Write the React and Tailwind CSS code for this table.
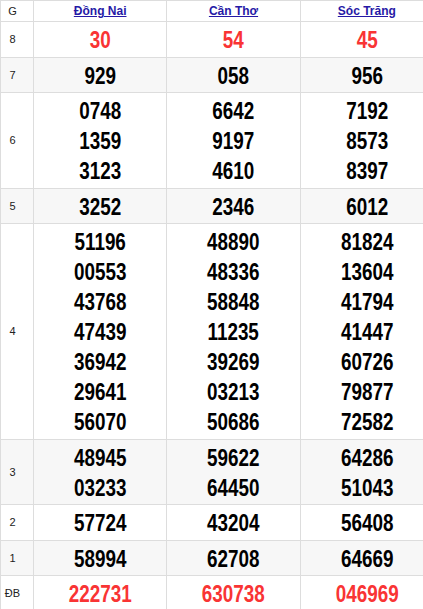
import React from 'react';

const provinces = ['Đồng Nai', 'Cần Thơ', 'Sóc Trăng'];

const rows = [
  { g: '8', red: true, vals: [['30'], ['54'], ['45']] },
  { g: '7', vals: [['929'], ['058'], ['956']] },
  { g: '6', vals: [['0748', '1359', '3123'], ['6642', '9197', '4610'], ['7192', '8573', '8397']] },
  { g: '5', vals: [['3252'], ['2346'], ['6012']] },
  {
    g: '4',
    vals: [
      ['51196', '00553', '43768', '47439', '36942', '29641', '56070'],
      ['48890', '48336', '58848', '11235', '39269', '03213', '50686'],
      ['81824', '13604', '41794', '41447', '60726', '79877', '72582'],
    ],
  },
  { g: '3', vals: [['48945', '03233'], ['59622', '64450'], ['64286', '51043']] },
  { g: '2', vals: [['57724'], ['43204'], ['56408']] },
  { g: '1', vals: [['58994'], ['62708'], ['64669']] },
  { g: 'ĐB', red: true, vals: [['222731'], ['630738'], ['046969']] },
];

export default function App() {
  return (
    <div className="w-full overflow-hidden bg-white font-['Liberation_Sans',Arial,sans-serif]">
      <table className="w-[434px] border-collapse table-fixed">
        <colgroup>
          <col className="w-[33px]" />
          <col />
          <col />
          <col />
        </colgroup>
        <thead>
          <tr className="h-[21px]">
            <th className="border border-[#dddddd] pr-[9px] text-center text-[11px] font-normal text-[#222]">G</th>
            {provinces.map(p => (
              <th key={p} className="border border-[#dddddd] text-center text-[12px] font-bold leading-[20px]">
                <a href="#" className="text-[#2619a6] underline">{p}</a>
              </th>
            ))}
          </tr>
        </thead>
        <tbody>
          {rows.map((r, i) => (
            <tr key={r.g} className={i % 2 === 1 ? 'bg-[#f7f7f7]' : 'bg-white'}>
              <td className="border border-[#dddddd] pr-[9px] text-center text-[11px] text-[#222]">{r.g}</td>
              {r.vals.map((col, j) => (
                <td key={j} className="border border-[#dddddd] pt-[3px] pb-[1.5px] text-center align-middle">
                  {col.map(n => (
                    <div
                      key={n}
                      className={`h-[30px] scale-x-[0.82] text-[23px] font-bold leading-[30px] ${r.red ? 'text-[#f93434]' : 'text-black'}`}
                    >
                      {n}
                    </div>
                  ))}
                </td>
              ))}
            </tr>
          ))}
        </tbody>
      </table>
    </div>
  );
}
